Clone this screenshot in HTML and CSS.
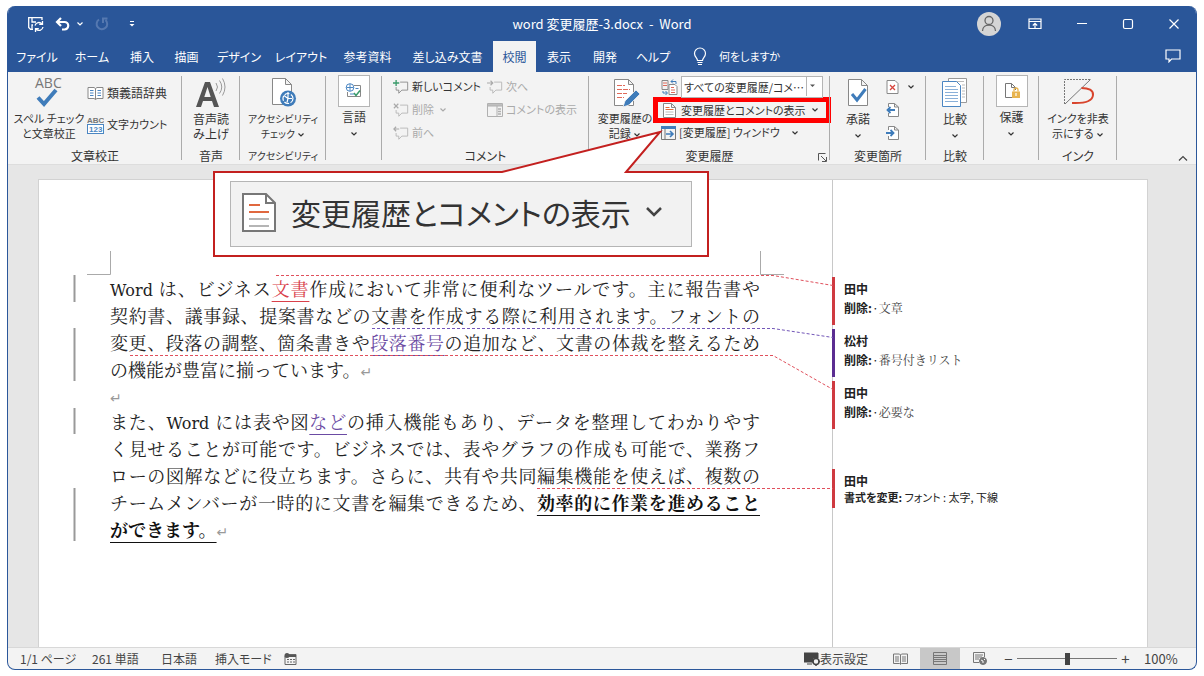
FILE: index.html
```html
<!DOCTYPE html>
<html lang="ja">
<head>
<meta charset="utf-8">
<title>word 変更履歴-3.docx - Word</title>
<link rel="stylesheet" href="styles.css">
</head>
<body>
<svg class="defs" aria-hidden="true">
  <symbol id="chev" viewBox="0 0 8 6"><path d="M1.500 1.500 4 4 6.500 1.500" fill="none" stroke="currentColor" stroke-width="1.200"/></symbol>
  <symbol id="balloon" viewBox="0 0 18 16"><path d="M8 2.500h8.500v9H10L6.500 15v-3.500H3.500V8" fill="none" stroke="currentColor"/></symbol>
</svg>
<main class="window">
  <header class="titlebar">
    <div class="quick">
      <button class="icon-btn" aria-label="上書き保存"><svg width="18" height="18" viewBox="0 0 18 18" fill="none" stroke="#fff" stroke-width="1.300"><path d="M6 14.300H3.500L1.700 12.500V2.700H15V5M5 3v4h4M5 14v-4h1"/><path d="M8 10.500a4 4 0 0 1 7-1.500M16 12a4 4 0 0 1-7 2M15.500 6v3.300h-3.300M8.500 17v-3.300h3.300"/></svg></button>
      <button class="icon-btn" aria-label="元に戻す"><svg width="16" height="16" viewBox="0 0 16 16" fill="none" stroke="#fff" stroke-width="2.200"><path d="M6 2 2 6l4 4M2 6h7.500a3.700 3.700 0 0 1 0 7.500H7"/></svg><svg class="chev"><use href="#chev"/></svg></button>
      <button class="icon-btn dim" aria-label="やり直し"><svg width="16" height="16" viewBox="0 0 16 16" fill="none" stroke="#5578b0" stroke-width="2"><path d="M5 3.500A5.300 5.300 0 1 0 11.500 4M9 7V2.500h4.500"/></svg></button>
      <button class="icon-btn" aria-label="ツールバーのユーザー設定"><svg width="8" height="8" viewBox="0 0 8 8"><path d="M2 1.500h4" stroke="#fff"/><path d="M1.500 4h5L4 6.500z" fill="#fff"/></svg></button>
    </div>
    <h1 class="title">word 変更履歴-3.docx&nbsp; -&nbsp; Word</h1>
    <div class="caption">
      <button class="avatar" aria-label="アカウント"><svg width="24" height="24" viewBox="0 0 24 24" fill="none" stroke="#666" stroke-width="1.300"><circle cx="12" cy="8.500" r="4"/><path d="M5.500 19c0-8 13-8 13 0"/></svg></button>
      <button class="icon-btn" aria-label="リボンの表示オプション"><svg width="14" height="12" viewBox="0 0 14 12" fill="none" stroke="#fff" stroke-width="1.200"><path d="M1 1h12v9.500H1zM1 3.500h12M7 10V5.500M4.800 7.500 7 5.300l2.200 2.200"/></svg></button>
      <button class="icon-btn" aria-label="最小化"><svg width="12" height="12" viewBox="0 0 12 12"><path d="M1 5.500h10" stroke="#fff"/></svg></button>
      <button class="icon-btn" aria-label="最大化"><svg width="12" height="12" viewBox="0 0 12 12"><rect x="1.500" y="1.500" width="9" height="9" rx="1.500" fill="none" stroke="#fff" stroke-width="1.200"/></svg></button>
      <button class="icon-btn" aria-label="閉じる"><svg width="12" height="12" viewBox="0 0 12 12"><path d="m1.500 1.500 9 9m0-9-9 9" stroke="#fff" stroke-width="1.200"/></svg></button>
    </div>
  </header>
  <nav class="tabs">
    <div class="tablist">
      <button>ファイル</button><button>ホーム</button><button>挿入</button><button>描画</button><button>デザイン</button><button>レイアウト</button><button>参考資料</button><button>差し込み文書</button><button class="active">校閲</button><button>表示</button><button>開発</button><button>ヘルプ</button>
    </div>
    <button class="tell"><svg width="14" height="20" viewBox="0 0 14 20" fill="none" stroke="#fff" stroke-width="1.200"><path d="M4.500 13.500c0-2.500-3-3.500-3-7a5.500 5.500 0 0 1 11 0c0 3.500-3 4.500-3 7zM4.500 15.500h5M5 17.500h4"/></svg><span>何をしますか</span></button>
    <button class="note-btn" aria-label="コメント"><svg width="16" height="14" viewBox="0 0 16 14" fill="none" stroke="#fff" stroke-width="1.200"><path d="M1 1h14v9H6.500L4 12.800V10H1z"/></svg></button>
  </nav>

  <section class="ribbon" aria-label="校閲">
    <div class="group g-proof">
      <div class="tools">
        <button class="big"><svg width="32" height="34" viewBox="0 0 32 34"><text x="2" y="13" class="ic-abc">ABC</text><path d="M5 22.500l6 6.500L23 15" fill="none" stroke="#3f7cba" stroke-width="4"/></svg><span>スペル チェック<br>と文章校正</span></button>
        <div class="stack wide">
          <button class="small"><svg width="17" height="16" viewBox="0 0 17 16" fill="#fff" stroke="#888"><path d="M1 2.500h6l1.500 1L10 2.500h6v11h-6l-1.500 1-1.500-1H1zM8.500 3.500v11"/><path d="M3 5.500h3.500M3 8h3.500M3 10.500h3.500M10.500 5.500H14M10.500 8H14M10.500 10.500H14" stroke="#4b86c2"/></svg>類義語辞典</button>
          <button class="small count"><svg width="17" height="18" viewBox="0 0 17 18"><text x="0" y="7" class="ic-mini">ABC</text><rect x=".5" y="8.500" width="16" height="9" fill="#fff" stroke="#4b86c2"/><text x="2" y="16" class="ic-mini blue">123</text></svg>文字カウント</button>
        </div>
      </div>
      <h2>文章校正</h2>
    </div>
    <div class="group g-voice">
      <div class="tools center"><button class="big"><svg width="32" height="34" viewBox="0 0 32 34"><path fill-rule="evenodd" d="M1 32 10 7h5l9 25h-5l-2-6H8l-2 6zM9.300 22h6.400L12.500 12z" fill="#555"/><path d="M21 8q3 4 0 8M24.500 5.500q4.500 6.500 0 13M27.500 3.500q5 8.500 0 17" fill="none" stroke="#999"/></svg><span>音声読<br>み上げ</span></button></div>
      <h2>音声</h2>
    </div>
    <div class="group g-access">
      <div class="tools center"><button class="big"><svg width="32" height="34" viewBox="0 0 32 34"><path d="M5.500 3.500h13l6 6v20h-19zM18.500 3.500v6h6" fill="#fff" stroke="#888"/><circle cx="21" cy="23.500" r="8" fill="#3f7cba"/><circle cx="21" cy="23.500" r="5" fill="none" stroke="#fff" stroke-width="1.200" stroke-dasharray="5 1.500"/><path d="M21 17v6.500h4M17 20.500l4 3-1 4" fill="none" stroke="#fff" stroke-width="1.200"/></svg><span>アクセシビリティ<br>チェック <svg class="chev"><use href="#chev"/></svg></span></button></div>
      <h2>アクセシビリティ</h2>
    </div>
    <div class="group g-lang">
      <div class="tools center"><button class="big boxed"><span class="box"><svg width="18" height="18" viewBox="0 0 18 18" fill="none"><path d="M9 3.500h6.500V14.500H2.500V10" stroke="#888"/><circle cx="5" cy="5.500" r="3.800" fill="#fff" stroke="#4b86c2"/><path d="M1.500 5.500h7M5 2v7M10.500 6.500h3M5 12h4" stroke="#4b86c2"/><path d="m9 11 2 2.500 4-5" stroke="#3b9b6b" stroke-width="1.500"/></svg></span><span>言語<br><svg class="chev"><use href="#chev"/></svg></span></button></div>
      <h2></h2>
    </div>
    <div class="group g-comment">
      <div class="tools">
        <div class="cgrid">
          <button class="small"><svg width="16" height="16" viewBox="0 0 18 16" color="#888"><use href="#balloon"/><path d="M3.500 0v7M0 3.500h7" stroke="#3b9b6b" stroke-width="1.500"/></svg>新しいコメント</button>
          <button class="small off" disabled><svg width="16" height="16" viewBox="0 0 18 16" color="#b5b5b5"><use href="#balloon"/><path d="M0 3.500h6M4 1l2.500 2.500L4 6" fill="none" stroke="#aaa" stroke-width="1.300"/></svg>次へ</button>
          <button class="small off" disabled><svg width="16" height="16" viewBox="0 0 18 16" color="#b5b5b5"><use href="#balloon"/><path d="m1 1 5 5m0-5L1 6" stroke="#aaa" stroke-width="1.300"/></svg>削除&nbsp; <svg class="chev"><use href="#chev"/></svg></button>
          <button class="small off" disabled><svg width="16" height="14" viewBox="0 0 16 14" fill="none" stroke="#b0b0b0"><path d="M.5.500h15v13H.5zM.5 3h15M10 3v10"/><path d="M1 2h14M11 6h3M11 8.500h3M11 11h3" stroke-width="1.500"/></svg>コメントの表示</button>
          <button class="small off" disabled><svg width="16" height="16" viewBox="0 0 18 16" color="#b5b5b5"><use href="#balloon"/><path d="M7 3.500H1M3.500 1 1 3.500 3.500 6" fill="none" stroke="#aaa" stroke-width="1.300"/></svg>前へ</button>
        </div>
      </div>
      <h2>コメント</h2>
    </div>
    <div class="group g-track">
      <div class="tools">
        <button class="big"><svg width="32" height="34" viewBox="0 0 32 34"><path d="M5.500 4.500h14l5 5v21h-19zM19.500 4.500v5h5" fill="#fff" stroke="#888"/><path d="M8 10.500h8M8 14.500h13M8 18.500h10M8 22.500h7" stroke="#e06a5a" stroke-dasharray="5 1"/><path d="m14 32 2-6 11-11 4 4-11 11z" fill="#3f7cba" stroke="#f3f3f3" stroke-width=".8"/></svg><span>変更履歴の<br>記録 <svg class="chev"><use href="#chev"/></svg></span></button>
        <div class="stack">
          <div class="combo">
            <svg width="17" height="16" viewBox="0 0 17 16" fill="none"><path d="M1 1.500h6v9H1z" stroke="#888"/><path d="M8 5.500h6l2 2v8H8z" fill="#fff" stroke="#888"/><path d="M2 4h4M2 6.500h4M10 8.500h3M10 11h4M10 13.500h4" stroke="#e06a5a"/><path d="M10 2.500h5V5M12 .5 10 2.500l2 2M2 12v2h4M4.500 12l2 2-2 2" stroke="#3f7cba"/></svg>
            <select aria-label="変更内容の表示"><option>すべての変更履歴/コメ⋯</option></select>
            <svg class="drop" width="13" height="20" viewBox="0 0 13 20"><path d="M.5 0v20" stroke="#b5b5b5"/><path d="M4 8.500h5L6.500 11z" fill="#555"/></svg>
          </div>
          <button class="small marked"><svg width="13" height="15" viewBox="0 0 13 15"><path d="M.5.500h8l4 4v10H.5zM8.500.500v4h4" fill="#fff" stroke="#888"/><path d="M2.500 4.500h4M2.500 6.500h8" stroke="#e06a3a"/><path d="M2.500 9h8M2.500 11.500h8" stroke="#bbb"/></svg><span>変更履歴とコメントの表示</span><svg class="chev"><use href="#chev"/></svg></button>
          <button class="small win"><svg width="15" height="14" viewBox="0 0 15 14" fill="none"><path d="M.5.500h14v13H.5zM4 2v11" stroke="#777"/><path d="M0 1.500h15" stroke="#3f7cba" stroke-width="3"/><path d="M5 8h7M9 5l3 3-3 3" stroke="#3f7cba" stroke-width="1.600"/></svg><span>[変更履歴] ウィンドウ</span><svg class="chev"><use href="#chev"/></svg></button>
        </div>
      </div>
      <h2>変更履歴</h2>
      <button class="launcher" aria-label="変更履歴オプション"><svg width="9" height="9" viewBox="0 0 9 9" fill="none" stroke="#555"><path d="M.5 7.500v-7h7M3 3l5 5M8.500 4v4.500H4"/></svg></button>
    </div>
    <div class="group g-change">
      <div class="tools">
        <button class="big"><svg width="32" height="34" viewBox="0 0 32 34"><path d="M6.500 4.500h13l6 6v20h-19zM19.500 4.500v6h6" fill="#fff" stroke="#888"/><path d="m10 19 5 6 8.500-11" fill="none" stroke="#3f7cba" stroke-width="3"/></svg><span>承諾<br><svg class="chev"><use href="#chev"/></svg></span></button>
        <div class="stack">
          <button class="small"><svg width="13" height="14" viewBox="0 0 13 14"><path d="M1 .5h8l3 3v10H1z" fill="#fff" stroke="#888"/><path d="m4 5 5 5m0-5-5 5" stroke="#d8443c" stroke-width="1.300"/></svg><svg class="chev"><use href="#chev"/></svg></button>
          <button class="small" aria-label="前の変更箇所"><svg width="13" height="14" viewBox="0 0 13 14" fill="none"><path d="M2.500 4V.5h6l4 3.500v9.500h-10V10M8.500.500V4h4" fill="#fff" stroke="#888"/><path d="M9 7H1.500M4.500 4l-3 3 3 3" stroke="#3f7cba" stroke-width="1.800"/></svg></button>
          <button class="small" aria-label="次の変更箇所"><svg width="13" height="14" viewBox="0 0 13 14" fill="none"><path d="M2.500 4V.5h6l4 3.500v9.500h-10V10M8.500.500V4h4" fill="#fff" stroke="#888"/><path d="M0 7h7.500M4.500 4l3 3-3 3" stroke="#3f7cba" stroke-width="1.800"/></svg></button>
        </div>
      </div>
      <h2>変更箇所</h2>
    </div>
    <div class="group g-compare">
      <div class="tools center"><button class="big"><svg width="32" height="34" viewBox="0 0 32 34"><path d="M9.500 3.500h18v24h-18z" fill="#fff" stroke="#999"/><path d="M12 6.500h13M23 10h3M23 13h3M23 16h3M23 19h3M23 22h3" stroke="#bbb"/><path d="M3.500 6.500h14l4 4v21h-18z" fill="#fff" stroke="#4b86c2"/><path d="M6 11.500h11M6 14.500h13M6 17.500h13M6 20.500h13M6 23.500h13M6 26.500h13" stroke="#8ab0d8"/></svg><span>比較<br><svg class="chev"><use href="#chev"/></svg></span></button></div>
      <h2>比較</h2>
    </div>
    <div class="group g-protect">
      <div class="tools center"><button class="big boxed"><span class="box"><svg width="18" height="18" viewBox="0 0 18 18" fill="none"><path d="M9 15.500H2.500v-14h6l4 4V8M8.500 1.500v4h4" stroke="#777"/><path d="M9 9.500h8V16H9z" fill="#e8b44f"/><path d="M11 9.500V8a2 2 0 0 1 4 0v1.500" stroke="#e8b44f" stroke-width="1.300"/><path d="M13 11v3" stroke="#fff" stroke-width="1.200"/></svg></span><span>保護<br><svg class="chev"><use href="#chev"/></svg></span></button></div>
      <h2></h2>
    </div>
    <div class="group g-ink">
      <div class="tools center"><button class="big"><svg width="34" height="34" viewBox="0 0 34 34" fill="none"><path d="M3.500 29V4.500H30" stroke="#777" stroke-dasharray="2 1"/><path d="M4 29 29.500 4.500" stroke="#777"/><path d="M20.500 13c7 0 12 2 11.500 7-.5 6-9 8.500-21 8" stroke="#d8442c" stroke-width="2"/></svg><span>インクを非表<br>示にする <svg class="chev"><use href="#chev"/></svg></span></button></div>
      <h2>インク</h2>
    </div>
    <button class="collapse" aria-label="リボンを折りたたむ"><svg width="10" height="7" viewBox="0 0 10 7"><path d="m1 5.500 4-4 4 4" fill="none" stroke="#444" stroke-width="1.200"/></svg></button>
  </section>

  <section class="workspace">
    <article class="page">
      <div class="text">
        <p><span class="line"><span class="latin">Word </span>は、ビジネス<ins class="red">文書</ins>作成において非常に便利なツールです。主に報告書や</span>
        <span class="line">契約書、議事録、提案書などの文書を作成する際に利用されます。フォントの</span>
        <span class="line">変更、段落の調整、箇条書きや<ins class="purple">段落番号</ins>の追加など、文書の体裁を整えるため</span>
        <span class="line end">の機能が豊富に揃っています。<i>↵</i></span></p>
        <p class="blank"><i>↵</i></p>
        <p><span class="line">また、<span class="latin">Word </span>には表や図<ins class="purple">など</ins>の挿入機能もあり、データを整理してわかりやす</span>
        <span class="line">く見せることが可能です。ビジネスでは、表やグラフの作成も可能で、業務フ</span>
        <span class="line">ローの図解などに役立ちます。さらに、共有や共同編集機能を使えば、複数の</span>
        <span class="line">チームメンバーが一時的に文書を編集できるため、<b>効率的に作業を進めること</b></span>
        <span class="line end"><b>ができます。</b><i>↵</i></span></p>
      </div>
      <aside class="revisions">
        <div class="rev"><strong>田中</strong><p><b>削除:</b>·<span>文章</span></p></div>
        <div class="rev violet"><strong>松村</strong><p><b>削除:</b>·<span>番号付きリスト</span></p></div>
        <div class="rev"><strong>田中</strong><p><b>削除:</b>·<span>必要な</span></p></div>
        <div class="rev format"><strong>田中</strong><p><b>書式を変更:</b> フォント : 太字, 下線</p></div>
      </aside>
      <svg class="marks" width="800" height="380" viewBox="0 0 800 380" fill="none" aria-hidden="true">
        <g stroke="#aaa"><path d="M48 94.500h23.500V71M745 94.500h-23.500V71"/><path d="M35.500 95v27M35.500 148v53M35.500 228v26M35.500 308v53" stroke="#999" stroke-width="2"/></g>
        <g stroke-dasharray="3 2"><path d="M237 95.500h497l60 10M91 175.500h643l60 34M498 308.500h296" stroke="#e0505c"/><path d="M333 148.500h401l60 9" stroke="#7357b8"/></g>
      </svg>
    </article>
  </section>

  <footer class="status">
    <span class="s-page">1/1 ページ</span><span class="s-words">261 単語</span><span class="s-lang">日本語</span><span class="s-mode">挿入モード</span>
    <svg width="13" height="12" viewBox="0 0 13 12" fill="none"><path d="M1 3v8.500h11V1.500H5" stroke="#666"/><circle cx="3" cy="2.500" r="2.500" fill="#555"/><path d="M5 3h7" stroke="#555" stroke-width="2"/><path d="M3 6.500h8M3 9h8" stroke="#666" stroke-dasharray="2 1"/></svg>
    <div class="views">
      <button class="display"><svg width="16" height="14" viewBox="0 0 16 14"><path d="M0 1h14v5H9v4H0zM3 12h5" fill="#444" stroke="#444"/><circle cx="12" cy="9.500" r="3" fill="#f3f3f3" stroke="#444" stroke-width="1.500"/><path d="M12 5v2M12 12v2M7.500 9.500h2M14.500 9.500h2" stroke="#444" stroke-width="1.500"/></svg>表示設定</button>
      <button class="view" aria-label="閲覧モード"><svg width="15" height="12" viewBox="0 0 15 12" fill="none" stroke="#777"><path d="M.5 1h6l1 1 1-1h6v9.500h-6l-1 1-1-1h-6zM7.500 2v9M2 4h4M2 6h4M2 8h4M9 4h4M9 6h4M9 8h4"/></svg></button>
      <button class="view on" aria-label="印刷レイアウト"><svg width="14" height="13" viewBox="0 0 14 13" fill="none" stroke="#777"><path d="M.5.500h13v12H.5zM1 3.500h12M1 5.500h12M1 7.500h12M1 9.500h12"/></svg></button>
      <button class="view" aria-label="Web レイアウト"><svg width="14" height="13" viewBox="0 0 14 13" fill="none" stroke="#777"><path d="M6 10.500H.5V.5h11V5M2 3h8M2 5h7M2 7h4"/><circle cx="10" cy="9" r="3.500" fill="#777"/><path d="m8 8 2 1v2M11 7l1 1" stroke="#fff"/></svg></button>
      <button class="zoom" aria-label="縮小">−</button>
      <input type="range" min="10" max="190" value="100" aria-label="ズーム">
      <button class="zoom" aria-label="拡大">+</button>
      <span class="percent">100%</span>
    </div>
  </footer>

  <div class="callout">
    <svg class="shape" width="498" height="130" viewBox="0 0 498 130" aria-hidden="true"><path d="M2 43h288L448 3 414 43h82v84H2z" fill="#fff" stroke="#c3201f" stroke-width="2"/></svg>
    <div class="enlarged">
      <svg width="36" height="41" viewBox="0 0 36 41" fill="none"><path d="M2 2h23l9 9v28H2z" fill="#fff" stroke="#777" stroke-width="2"/><path d="M25 2v9h9" stroke="#777" stroke-width="2"/><path d="M8 13h11M8 20h20" stroke="#e0683f" stroke-width="2"/><path d="M8 27h20M8 34h20" stroke="#b5b5b5" stroke-width="2"/></svg>
      <span>変更履歴とコメントの表示</span>
      <svg width="18" height="12" viewBox="0 0 18 12"><path d="m2 2 7 7 7-7" fill="none" stroke="#444" stroke-width="2.500"/></svg>
    </div>
  </div>
</main>
</body>
</html>
```
FILE: styles.css
```css
* { box-sizing: border-box; }
body {
  margin: 0;
  padding: 6px 7px 6px 7px;
  background: #fff;
  font: 12px/15px "Noto Sans CJK JP", sans-serif;
  font-feature-settings: "palt";
  color: #333;
}
.defs { position: absolute; width: 0; height: 0; }
button {
  margin: 0; padding: 0; border: 0; background: none;
  font: inherit; color: inherit; font-feature-settings: inherit; white-space: nowrap;
}
h1, h2, p { margin: 0; font-size: 12px; font-weight: 400; }
svg { flex: none; }
.chev { width: 8px; height: 6px; vertical-align: middle; }

.window {
  position: relative;
  display: flex; flex-direction: column;
  height: calc(100vh - 12px);
  border: 1px solid #2b579a;
  border-top: 0;
  border-radius: 8px;
  overflow: hidden;
  background: #f3f3f3;
}
.titlebar {
  display: grid; grid-template-columns: 1fr auto 1fr;
  align-items: center;
  height: 35px;
  background: #2a5699; color: #fff;
}
.title { font: 13px "Noto Sans CJK JP", sans-serif; font-feature-settings: "palt"; }
.quick { display: flex; align-items: center; gap: 10px; padding-left: 19px; }
.icon-btn { display: flex; align-items: center; gap: 5px; }
.quick .icon-btn:last-child { margin-left: 8px; }
.caption { display: flex; align-items: center; justify-content: flex-end; gap: 34px; padding-right: 16px; }
.caption .avatar { margin-right: -7px; }
.avatar { width: 24px; height: 24px; border-radius: 50%; background: #d5d5d5; }

.tabs { display: flex; height: 31px; background: #2a5699; color: #fff; }
.tablist {
  display: grid;
  grid-template-columns: 54px 56px 44px 45px 60px 64px 69px 91px 43px 46px 46px 50px;
  padding-left: 2px;
}
.tabs .active { background: #f3f3f3; color: #2a5699; }
.tell { display: flex; align-items: center; gap: 12px; margin-left: 15px; font-size: 11px; }
.note-btn { margin-left: auto; padding-right: 15px; }

.ribbon { position: relative; display: flex; height: 93px; border-bottom: 1px solid #ddd; }
.group { position: relative; display: flex; flex-direction: column; height: 92px; padding-top: 3px; }
.group::after { content: ""; position: absolute; right: 0; top: 4px; bottom: 4px; border-right: 1px solid #ababab; }
.group h2 { height: 17px; text-align: center; line-height: 17px; }
.tools { display: flex; height: 73px; }
.center { justify-content: center; }
.g-proof { width: 174px; }
.g-voice { width: 58px; }
.g-access { width: 86px; }
.g-lang { width: 56px; }
.g-comment { width: 207px; }
.g-track { width: 241px; }
.g-change { width: 96px; }
.g-compare { width: 58px; }
.g-protect { width: 55px; }
.g-ink { width: 78px; }
.big { display: flex; flex-direction: column; align-items: center; justify-content: flex-start; gap: 2px; }
.g-proof .big { width: 82px; font-size: 11px; }
.g-proof .count { font-size: 11px; }
.g-ink .big { font-size: 11px; }
.g-access h2, .g-access .big { font-size: 10px; }
.g-track .big { width: 72px; font-size: 11px; }
.g-change .big { width: 56px; }
.box { display: grid; place-items: center; width: 32px; height: 32px; border: 1px solid #b5b5b5; background: #fff; }
.ic-abc { font: 14px "Open Sans", sans-serif; fill: #777; }
.ic-mini { font: bold 8px "Liberation Sans", sans-serif; fill: #777; }
.blue { fill: #4b86c2; }
.stack { display: flex; flex-direction: column; }
.wide { gap: 9px; padding-top: 6px; margin-left: -3px; }
.small { display: flex; align-items: center; gap: 3px; height: 23px; }
.cgrid { display: grid; grid-template-columns: 94px auto; align-content: start; padding-left: 11px; font-size: 11px; }
.cgrid .small { height: 23px; }
.off { color: #aaa; }
.combo { position: relative; display: flex; align-items: center; gap: 3px; height: 23px; }
.combo select {
  appearance: none;
  width: 142px; height: 22px; padding: 0 16px 0 2px;
  border: 1px solid #b5b5b5; border-radius: 0; background: #fff;
  font: 11px "Noto Sans CJK JP", sans-serif; font-feature-settings: "palt"; color: #333;
}
.drop { position: absolute; right: 7px; top: 1px; }
.g-track .small { font-size: 11px; }
.g-track .marked {
  gap: 5px; width: 168px; height: 16px; margin: 4px 0 3px -3px; padding-left: 5px;
  outline: 5px solid #f00; outline-offset: 0;
}
.win .chev { margin-left: 8px; }
.launcher { position: absolute; right: 3px; bottom: 2px; line-height: 9px; }
.g-change .small { gap: 8px; }
.collapse { position: absolute; right: 8px; bottom: 0; }

.workspace { flex: 1; min-height: 0; padding: 14px 48px 0 30px; background: #e6e6e6; overflow: hidden; }
.page {
  position: relative;
  display: grid; grid-template-columns: 794px 1fr;
  height: 100%;
  border: 1px solid #d2d2d2; border-bottom: 0;
  background: #fff;
}
.text {
  padding: 97px 72px 0 71px;
  border-right: 1px solid #c8c8c8;
  font-family: "Liberation Serif", "Noto Serif CJK JP", "Noto Sans CJK JP", serif;
  font-feature-settings: normal;
  color: #222;
}
.text p { font-size: 18px; line-height: 27px; }
.text .line { display: block; white-space: nowrap; text-align: justify; text-align-last: justify; }
.text .end { text-align-last: left; }
.text .blank { line-height: 25px; }
.latin { font-family: "DejaVu Serif", serif; font-size: 16px; line-height: 20px; }
.text i { font: 14px "DejaVu Sans", sans-serif; color: #999; }
.text ins, .text b { text-decoration: underline 1px; text-underline-offset: 5px; }
.text b { font-weight: 700; color: #111; }
.text .red { color: #d9404a; }
.text .purple { color: #6b4ba3; }
.revisions { display: flex; flex-direction: column; gap: 4px; padding-top: 97px; }
.rev {
  height: 48px; padding: 2px 0 0 9px; margin-left: -1px;
  border-left: 3px solid #cf3a40;
  font-size: 12px; line-height: 19px; color: #222; white-space: nowrap;
}
.rev strong { display: block; font-size: 12px; }
.rev span { font-family: "Noto Serif CJK JP", serif; font-feature-settings: normal; color: #444; }
.rev.violet { border-color: #5b2d91; }
.format { height: 39px; margin-top: 36px; line-height: 16px; padding-top: 4px; }
.format p { font-size: 11px; }
.marks { position: absolute; left: 0; top: 0; }

.status { display: flex; align-items: center; height: 22px; padding-left: 12px; border-top: 1px solid #d8d8d8; color: #444; white-space: nowrap; }
.s-page { width: 72px; }
.s-words { width: 69px; }
.s-lang { width: 54px; }
.s-mode { width: 69px; }
.views { display: flex; align-items: center; height: 100%; margin-left: auto; }
.display { display: flex; align-items: center; margin-right: 12px; }
.view { display: grid; place-items: center; width: 40px; height: 100%; }
.on { background: #c8c8c8; }
.zoom { width: 17px; font-size: 15px; }
.percent { width: 62px; padding-left: 10px; font-size: 13px; }
input[type="range"] {
  appearance: none; width: 100px; height: 12px; margin: 0;
  background: linear-gradient(#777, #777) center / 100% 1px no-repeat;
}
input[type="range"]::-webkit-slider-thumb { appearance: none; width: 5px; height: 12px; background: #444; }

/* Enlarged command shown over the document */
.callout { position: absolute; left: 204px; top: 123px; width: 498px; height: 130px; padding: 52px 18px 10px 18px; pointer-events: none; }
.shape { position: absolute; left: 0; top: 0; }
.enlarged {
  position: relative;
  display: flex; align-items: center; gap: 14px;
  height: 66px; padding: 0 10px 4px;
  border: 1px solid #b5b5b5; background: #f2f2f2;
  font-size: 30px; line-height: 40px; white-space: nowrap;
}
```
